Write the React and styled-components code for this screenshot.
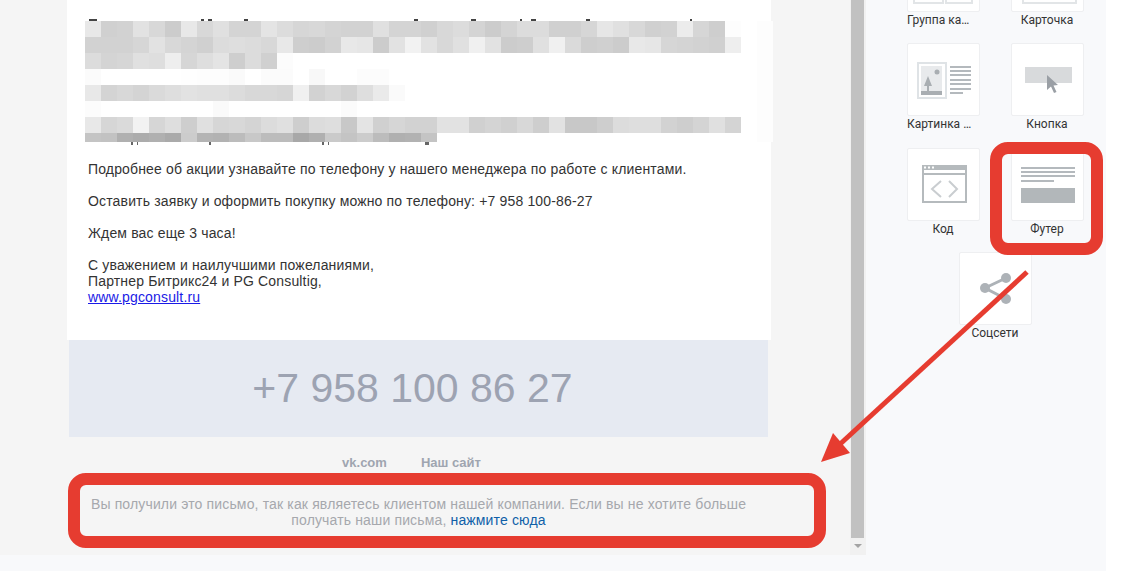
import React from 'react';
import styled, { createGlobalStyle } from 'styled-components';

const GlobalStyle = createGlobalStyle`
  html, body {
    margin: 0;
    background: #ffffff;
    font-family: "Liberation Sans", Arial, sans-serif;
  }
`;

// pixelated part of the letter, gray level per 16px cell
const mosaicRows = [
  'e8 d0 d2 e2 d8 cc e8 d8 e0 d4 d4 e4 dc d6 d8 d4 d2 d2 e0 d4 d4 d0 d8 dc d4 cc d4 dc dc d0 d0 d6 e6 e0 d8 d0 d2 ec d6 ce fd ff fd',
  'd2 d2 d2 d6 e2 d8 d4 d0 dc de dc d8 e8 ce cc d2 e8 e6 cc e2 f2 e2 d8 e0 f0 e2 cc ce e0 f0 da ce d0 cc e8 e6 d6 d4 d2 d0 ee ff fd',
  'dc d4 d6 e0 de ee d6 de e4 ce dc d0 fc ff ff ff ff ff ff ff ff ff ff ff ff ff ff ff ff ff ff ff ff ff ff ff ff ff ff ff ff ff fd',
  'fb ff ff ff ff ff fe fd fd fa ff fb fb ff f8 ff ff fc fc ff ff ff ff ff ff ff ff ff ff ff ff ff ff ff ff ff ff ff ff ff ff ff fd',
  'e8 d4 d8 d4 da de e2 e0 e0 dc d8 d8 d6 f0 d2 d8 d2 de ea fa ff ff ff ff ff ff ff ff ff ff ff ff ff ff ff ff ff ff ff ff ff ff fd',
  'fc ff ff ff ff ff ff ff fa ff ff ff ff ff ff ff fb ff ff ff ff ff ff ff ff ff ff ff ff ff ff ff ff ff ff ff ff ff ff ff ff ff fd',
  'e8 d6 da f2 d6 de ce e0 d6 d8 d4 dc e0 ce dc de c8 e4 d0 d6 d2 d2 e2 e2 d0 d4 d0 d8 ce e2 c8 c8 ce dc de de d2 ce d4 e0 d4 ff fd',
  'c4 c2 b0 ac b0 aa cc b4 b2 bc c8 bc bc a8 b0 ca c4 cc bc b0 b2 c4 ff ff ff ff ff ff ff ff ff ff ff ff ff ff ff ff ff ff ff ff fd',
].map((row) => row.split(' '));

// remains of the text lines that stick out of the mosaic
const topMarks = [[89, 8], [201, 3], [208, 4], [244, 4], [414, 4], [471, 5], [520, 2], [531, 5], [586, 4], [690, 2]];
const bottomMarks = [[131, 2], [137, 1], [209, 2], [322, 2], [328, 1], [425, 4]];

const Mosaic = () => (
  <MosaicSvg width="688" height="126" viewBox="0 0 688 126">
    {topMarks.map(([x, w]) => (
      <rect key={x} x={x - 85} y="0" width={w} height="2" fill="#444" />
    ))}
    {mosaicRows.map((row, r) =>
      row.map((gray, c) => (
        <rect
          key={`${r}-${c}`}
          x={c * 16}
          y={2 + r * 16}
          width="16"
          height={r === 7 ? 9 : 16}
          fill={`#${gray}${gray}${gray}`}
        />
      ))
    )}
    {bottomMarks.map(([x, w]) => (
      <rect key={x} x={x - 85} y="123" width={w} height="3" fill="#666" />
    ))}
  </MosaicSvg>
);

const GroupIcon = () => (
  <svg width="71" height="71" viewBox="0 0 71 71">
    <rect x="6" y="40" width="29" height="23" fill="none" stroke="#e2e5e7" strokeWidth="2" />
    <rect x="38" y="40" width="26" height="23" fill="none" stroke="#e2e5e7" strokeWidth="2" />
  </svg>
);

const CardIcon = () => (
  <svg width="71" height="71" viewBox="0 0 71 71">
    <rect x="11" y="30" width="53" height="33" fill="none" stroke="#e2e5e7" strokeWidth="2" />
  </svg>
);

const PictureIcon = () => (
  <svg width="71" height="71" viewBox="0 0 71 71">
    <rect x="10" y="19" width="28" height="35" fill="#ffffff" stroke="#dfe3e6" strokeWidth="2" />
    <rect x="13" y="22" width="21" height="29" fill="#e8eaec" />
    <circle cx="29" cy="28" r="2.5" fill="#a9aeb2" />
    <path d="M20 32l-4 10h3v5h2v-5h3z" fill="#a9aeb2" />
    <rect x="13" y="47" width="21" height="4" fill="#a9aeb2" />
    {[22, 26, 30, 35, 39, 44].map((y) => (
      <rect key={y} x="42" y={y} width="21" height="2" fill="#b4b9bd" />
    ))}
    <rect x="42" y="48" width="13" height="2" fill="#b4b9bd" />
  </svg>
);

const ButtonIcon = () => (
  <svg width="71" height="71" viewBox="0 0 71 71">
    <rect x="13" y="23" width="47" height="16" fill="#d8dadc" />
    <path d="M35 31L35 46L39 42.5L42 49L44.5 48L41.5 41.5L46 41z" fill="#9a9fa5" />
  </svg>
);

const CodeIcon = () => (
  <svg width="71" height="71" viewBox="0 0 71 71">
    <rect x="15" y="17" width="43" height="36" fill="none" stroke="#b5babd" strokeWidth="2" />
    <rect x="14" y="16" width="45" height="5" fill="#b5babd" />
    <rect x="14" y="24" width="45" height="2" fill="#b5babd" />
    <rect x="16" y="17.5" width="2" height="2" fill="#fff" />
    <rect x="20" y="17.5" width="2" height="2" fill="#fff" />
    <rect x="24" y="17.5" width="2" height="2" fill="#fff" />
    <path d="M33 32l-9 8 9 8M41 32l8 8-8 8" fill="none" stroke="#c9cdd0" strokeWidth="2" />
  </svg>
);

const FooterIcon = () => (
  <svg width="71" height="71" viewBox="0 0 71 71">
    <rect x="9" y="18" width="54" height="2" fill="#b4b9bd" />
    <rect x="9" y="22" width="54" height="2" fill="#b4b9bd" />
    <rect x="9" y="26" width="54" height="2" fill="#b4b9bd" />
    <rect x="9" y="31" width="33" height="2" fill="#b4b9bd" />
    <rect x="9" y="39" width="54" height="15" fill="#b2b7ba" />
  </svg>
);

const ShareIcon = () => (
  <svg width="71" height="71" viewBox="0 0 71 71">
    <path d="M46 25L25 35l21 11" fill="none" stroke="#adb2b7" strokeWidth="3" />
    <circle cx="46" cy="25" r="5" fill="#adb2b7" />
    <circle cx="25" cy="35" r="5" fill="#adb2b7" />
    <circle cx="46" cy="46" r="5" fill="#adb2b7" />
  </svg>
);

const blocks = [
  { label: 'Группа карточек', icon: <GroupIcon />, clipped: true },
  { label: 'Карточка', icon: <CardIcon /> },
  { label: 'Картинка и текст', icon: <PictureIcon />, clipped: true },
  { label: 'Кнопка', icon: <ButtonIcon /> },
  { label: 'Код', icon: <CodeIcon /> },
  { label: 'Футер', icon: <FooterIcon /> },
  { label: 'Соцсети', icon: <ShareIcon /> },
];

function App() {
  return (
    <>
      <GlobalStyle />
      <Page>
        <Workspace>
          <Preview>
            <LetterColumn>
              <LetterCard>
                <Mosaic />
                <Paragraph>Подробнее об акции узнавайте по телефону у нашего менеджера по работе с клиентами.</Paragraph>
                <Paragraph>Оставить заявку и оформить покупку можно по телефону: +7 958 100-86-27</Paragraph>
                <Paragraph>Ждем вас еще 3 часа!</Paragraph>
                <Paragraph>
                  С уважением и наилучшими пожеланиями,
                  <br />
                  Партнер Битрикс24 и PG Consultig,
                  <br />
                  <LetterLink href="#">www.pgconsult.ru</LetterLink>
                </Paragraph>
              </LetterCard>
              <PhoneBanner>+7 958 100 86 27</PhoneBanner>
              <FooterLinks>
                <FooterLink>vk.com</FooterLink>
                <FooterLink>Наш сайт</FooterLink>
              </FooterLinks>
              <Notice>
                Вы получили это письмо, так как являетесь клиентом нашей компании. Если вы не хотите больше
                получать наши письма, <NoticeLink href="#">нажмите сюда</NoticeLink>
              </Notice>
            </LetterColumn>
            <Scrollbar>
              <ScrollThumb />
              <ScrollArrow />
            </Scrollbar>
          </Preview>
          <Sidebar>
            <BlockList>
              {blocks.map((block) => (
                <Block key={block.label}>
                  <Tile>{block.icon}</Tile>
                  <BlockLabel $clipped={block.clipped}>{block.label}</BlockLabel>
                </Block>
              ))}
            </BlockList>
          </Sidebar>
        </Workspace>
        <Highlight $left={68} $top={473} $width={758} $height={75} />
        <Highlight $left={990} $top={142} $width={113} $height={113} />
        <ArrowSvg width="1124" height="584" viewBox="0 0 1124 584">
          <path d="M1027 272L838 446" stroke="#e63c30" strokeWidth="5" fill="none" />
          <path d="M821 462L833 433 850 453z" fill="#e63c30" />
        </ArrowSvg>
      </Page>
    </>
  );
}

const Page = styled.div`
  position: relative;
  width: 1124px;
  height: 584px;
  overflow: hidden;
`;

const Workspace = styled.div`
  display: flex;
  align-items: flex-start;
  width: 1106px;
  height: 571px;
  background: #f8f9fb;
`;

const Preview = styled.div`
  display: flex;
  width: 866px;
  height: 555px;
  flex: none;
  background: #f5f5f5;
`;

const LetterColumn = styled.div`
  width: 850px;
  padding-left: 67px;
  box-sizing: border-box;
`;

const LetterCard = styled.div`
  width: 704px;
  height: 340px;
  padding: 19px 0 0 18px;
  box-sizing: border-box;
  background: #ffffff;
`;

const MosaicSvg = styled.svg`
  display: block;
  margin-bottom: 16px;
  overflow: visible;
`;

const Paragraph = styled.p`
  margin: 0 0 16px 3px;
  font-size: 14px;
  line-height: 16px;
  letter-spacing: 0.155px;
  color: #333333;
`;

const LetterLink = styled.a`
  color: #1a1ae6;
  text-decoration: underline;
`;

const PhoneBanner = styled.div`
  width: 699px;
  height: 97px;
  margin-left: 2px;
  padding-right: 12px;
  box-sizing: border-box;
  background: #e6eaf2;
  color: #9da3b2;
  font-size: 41px;
  line-height: 97px;
  text-align: center;
`;

const FooterLinks = styled.div`
  display: flex;
  justify-content: center;
  gap: 34px;
  width: 699px;
  margin: 18px 0 0 2px;
  padding-right: 14px;
  box-sizing: border-box;
`;

const FooterLink = styled.span`
  font-size: 13px;
  line-height: 16px;
  font-weight: bold;
  color: #9fa5b0;
`;

const Notice = styled.div`
  width: 699px;
  margin: 25px 0 0 2px;
  font-size: 14px;
  line-height: 16px;
  letter-spacing: 0.15px;
  text-align: center;
  color: #a6a8ad;
`;

const NoticeLink = styled.a`
  color: #0f5fa8;
  text-decoration: none;
`;

const Scrollbar = styled.div`
  display: flex;
  flex-direction: column;
  align-items: center;
  width: 16px;
  height: 555px;
  background: #f1f1f1;
`;

const ScrollThumb = styled.div`
  width: 13px;
  height: 538px;
  margin-right: 1px;
  background: #c1c1c1;
`;

const ScrollArrow = styled.div`
  width: 0;
  height: 0;
  margin: 6px 1px 0 0;
  border-left: 4px solid transparent;
  border-right: 4px solid transparent;
  border-top: 4px solid #a3a3a3;
`;

const Sidebar = styled.div`
  width: 240px;
  height: 571px;
  overflow: hidden;
`;

const BlockList = styled.div`
  display: flex;
  flex-wrap: wrap;
  justify-content: center;
  width: 208px;
  margin: -61px 0 0 25px;
`;

const Block = styled.div`
  display: flex;
  flex-direction: column;
  align-items: center;
  width: 104px;
  height: 104.4px;
`;

const Tile = styled.div`
  width: 73px;
  height: 73px;
  box-sizing: border-box;
  background: #ffffff;
  border: 1px solid #eeeff1;
  border-radius: 2px;

  svg {
    display: block;
  }
`;

const BlockLabel = styled.div`
  width: 72px;
  margin-top: 1px;
  padding-right: ${(p) => (p.$clipped ? '4px' : '0')};
  box-sizing: border-box;
  font-family: Roboto, "Liberation Sans", sans-serif;
  font-size: 12px;
  line-height: 14px;
  color: #333333;
  text-align: center;
  white-space: nowrap;
  overflow: hidden;
  text-overflow: ellipsis;
`;

const Highlight = styled.div`
  position: absolute;
  left: ${(p) => p.$left}px;
  top: ${(p) => p.$top}px;
  width: ${(p) => p.$width}px;
  height: ${(p) => p.$height}px;
  box-sizing: border-box;
  border: 12px solid #e63c30;
  border-radius: 18px;
  pointer-events: none;
`;

const ArrowSvg = styled.svg`
  position: absolute;
  left: 0;
  top: 0;
  pointer-events: none;
`;

export default App;
